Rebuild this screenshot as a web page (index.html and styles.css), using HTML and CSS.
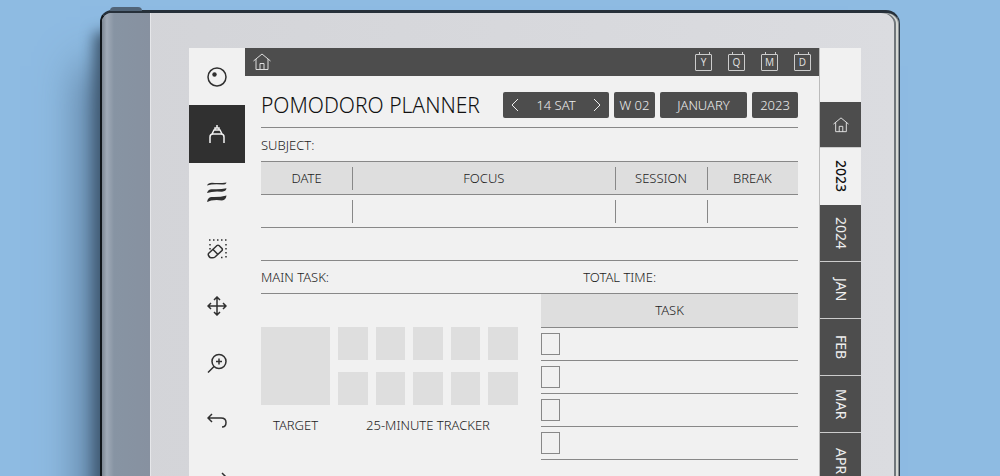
FILE: index.html
```html
<!DOCTYPE html>
<html lang="en">
<head>
<meta charset="utf-8">
<title>Pomodoro Planner</title>
<link rel="stylesheet" href="styles.css">
</head>
<body>

<div class="device">
  <div class="spine"></div>
  <div class="screen">

    <!-- pen tools -->
    <div class="tools">
      <button class="tool" aria-label="Close toolbar">
        <svg width="20" height="20" viewBox="0 0 20 20"><circle cx="10" cy="10" r="9"/><circle class="solid" cx="7.500" cy="7.500" r="2.200"/></svg>
      </button>
      <button class="tool active" aria-label="Pen">
        <svg width="20" height="20" viewBox="0 0 20 20"><path d="M3 19v-6q0-3 3-3h8q3 0 3 3v6M5 10l2-4h6l2 4M8 6V4h4v2M10 4V1"/></svg>
      </button>
      <button class="tool" aria-label="Stroke thickness">
        <svg width="20" height="20" viewBox="0 0 20 20"><path class="solid" d="M0 3.500Q1 .8 5 .8q8 .6 14.500-.4Q19 2.600 15 2.600 6 1.800 0 3.500z"/><path class="solid" d="M0 11Q1 7 5 7.200q8 .6 14.500-.9Q19 9.500 15 9.700 6 8.800 0 11z"/><path class="solid" d="M0 20Q1 14.800 5 15q8 .3 14.500-1.500Q19 18 15 18.400 5 17.300 0 20z"/></svg>
      </button>
      <button class="tool" aria-label="Eraser">
        <svg width="20" height="20" viewBox="0 0 20 20"><path class="dots" d="M2 1h18M19 5v15M3 5v6M14 18.500h3"/><path d="M1.500 14.500L10 6.500q1-.7 2 0l3 3q.7 1 0 2l-7 6.500q-1 .8-2.500.8H4q-1 0-1.500-.8l-1-1.500q-.5-1 0-2zM6 10.500l5 5"/></svg>
      </button>
      <button class="tool" aria-label="Move">
        <svg width="20" height="20" viewBox="0 0 20 20"><path d="M10 1v18M1 10h18M7 4l3-3 3 3M7 16l3 3 3-3M4 7l-3 3 3 3M16 7l3 3-3 3"/></svg>
      </button>
      <button class="tool" aria-label="Zoom in">
        <svg width="20" height="20" viewBox="0 0 20 20"><circle cx="12" cy="8.500" r="7"/><path d="M12 5.500v6M9 8.500h6M7 13.500L1 19.500"/></svg>
      </button>
      <button class="tool" aria-label="Undo">
        <svg width="20" height="20" viewBox="0 0 20 20"><path d="M5 4L1 8l4 4M1 8h13q5 0 5 4.500T15 17"/></svg>
      </button>
      <button class="tool" aria-label="Redo">
        <svg width="20" height="20" viewBox="0 0 20 20"><path d="M15 6l4 4-4 4M19 10H6q-5 0-5 4.500T5 19"/></svg>
      </button>
    </div>

    <!-- planner page -->
    <div class="page">
      <div class="topbar">
        <a href="#" class="home" aria-label="Home"><svg width="18" height="18" viewBox="0 0 18 18"><path d="M0.500 8L9 1l8.500 7M3 6v10.500h12V6M7 16.500v-6h4v6"/></svg></a>
        <a href="#" class="cal">Y</a>
        <a href="#" class="cal">Q</a>
        <a href="#" class="cal">M</a>
        <a href="#" class="cal">D</a>
      </div>

      <div class="content">
        <div class="header">
          <h1>POMODORO PLANNER</h1>
          <div class="dates">
            <div class="day">
              <button aria-label="Previous day"><svg width="8" height="12" viewBox="0 0 8 12"><path d="M7 0L1 6l6 6"/></svg></button>
              <a href="#">14 SAT</a>
              <button aria-label="Next day"><svg width="8" height="12" viewBox="0 0 8 12"><path d="M1 0l6 6-6 6"/></svg></button>
            </div>
            <a href="#" class="week">W 02</a>
            <a href="#" class="month">JANUARY</a>
            <a href="#" class="year">2023</a>
          </div>
        </div>

        <div class="line subject">
          <label for="subject">SUBJECT:</label>
          <input type="text" id="subject">
        </div>

        <table>
          <thead>
            <tr><th class="narrow">DATE</th><th>FOCUS</th><th class="narrow">SESSION</th><th class="narrow">BREAK</th></tr>
          </thead>
          <tbody>
            <tr><td></td><td></td><td></td><td></td></tr>
            <tr><td colspan="4"></td></tr>
          </tbody>
        </table>

        <div class="line totals">
          <div class="field">
            <label for="main-task">MAIN TASK:</label>
            <input type="text" id="main-task">
          </div>
          <div class="field">
            <label for="total-time">TOTAL TIME:</label>
            <input type="text" id="total-time">
          </div>
        </div>

        <div class="bottom">
          <div class="tracker">
            <div class="target"></div>
            <div class="boxes">
              <i></i><i></i><i></i><i></i><i></i>
              <i></i><i></i><i></i><i></i><i></i>
            </div>
            <span>TARGET</span>
            <span>25-MINUTE TRACKER</span>
          </div>
          <div class="tasks">
            <h2>TASK</h2>
            <ul>
              <li><input type="checkbox" aria-label="Task 1 done"></li>
              <li><input type="checkbox" aria-label="Task 2 done"></li>
              <li><input type="checkbox" aria-label="Task 3 done"></li>
              <li><input type="checkbox" aria-label="Task 4 done"></li>
            </ul>
          </div>
        </div>
      </div>
    </div>

    <!-- side tabs -->
    <div class="tabs">
      <a href="#" class="tab-home" aria-label="Home"><svg width="16" height="16" viewBox="0 0 18 18"><path d="M0.500 8L9 1l8.500 7M3 6v10.500h12V6M7 16.500v-6h4v6"/></svg></a>
      <a href="#" class="current">2023</a>
      <a href="#">2024</a>
      <a href="#">JAN</a>
      <a href="#">FEB</a>
      <a href="#">MAR</a>
      <a href="#">APR</a>
    </div>

  </div>
</div>

</body>
</html>
```
FILE: styles.css
```css
* { box-sizing: border-box; }

body {
  margin: 0;
  height: 100vh;
  overflow: hidden;
  background: #8ebbe2;
  color: #222;
  font-family: "Noto Sans", "Open Sans", sans-serif;
  font-size: 13px;
  font-weight: 300;
  line-height: 16px;
}

a { color: inherit; text-decoration: none; }
button { background: none; border: 0; padding: 0; color: inherit; cursor: pointer; }
svg { display: block; fill: none; stroke: currentColor; }

/* tablet body */
.device {
  position: relative;
  display: flex;
  min-height: 100vh;
  margin: 10px 10% 0;
  padding-right: 38px;
  border-top: 3px solid #26303a;
  border-left: 2px solid #11161b;
  border-right: 1px solid #2f3b46;
  border-radius: 12px 14px 0 0;
  background: linear-gradient(90deg, #d3d4d8, #dbdce0);
  box-shadow:
    inset -1px 0 #8b9196,
    inset -3px 0 #d5d8d4,
    inset -5px 0 #70767b,
    -14px 14px 14px -8px #3f5870,
    -36px 40px 40px -16px #5b7c9c;
}

/* power button on the top edge */
.device::before {
  content: "";
  position: absolute;
  top: -6px;
  left: 8px;
  width: 32px;
  height: 4px;
  border-radius: 4px 4px 0 0;
  background: #526578;
}

.spine {
  width: 49px;
  border-right: 1px solid #e6e7ea;
  border-top-left-radius: 9px;
  background: linear-gradient(90deg, #7c8692, #a0aab7 10%, #8794a3 25%, #8791a0);
}

.screen {
  flex: 1;
  display: flex;
  margin: 35px 0 0 38px;
  background: #f1f1f1;
}

/* left tools */
.tools { width: 56px; }

.tool {
  display: flex;
  align-items: center;
  justify-content: center;
  width: 100%;
  height: 57px;
  color: #303030;
}
.tool svg { stroke-width: 1.5; }
.tool .solid { fill: currentColor; stroke: none; }
.tool .dots { stroke-dasharray: 1.500 2.500; }
.tool.active { height: 58px; background: #303030; color: #f1f1f1; }

.page { flex: 1; }

.topbar {
  display: flex;
  align-items: center;
  gap: 16px;
  height: 28px;
  padding: 0 8px;
  background: #4d4d4d;
  color: #ddd;
}
.home { margin-right: auto; }

.cal {
  position: relative;
  width: 17px;
  height: 17px;
  border: 1px solid #ccc;
  border-radius: 1px;
  font-size: 10px;
  font-weight: 400;
  line-height: 15px;
  text-align: center;
}
.cal::before {
  content: "";
  position: absolute;
  top: -3px;
  left: 3px;
  width: 9px;
  height: 3px;
  border: solid #ccc;
  border-width: 0 1px;
}

.content { padding: 0 21px 0 16px; }

.header {
  display: flex;
  align-items: center;
  justify-content: space-between;
  height: 52px;
  padding-top: 6px;
  border-bottom: 1px solid #888;
}

h1 {
  margin: 0;
  color: #111;
  font-size: 21px;
  font-weight: 300;
  line-height: 24px;
}

.dates { display: flex; gap: 5px; }
.dates > * {
  height: 26px;
  border-radius: 2px;
  background: #4d4d4d;
  color: #eee;
  line-height: 26px;
  text-align: center;
}
.day {
  display: flex;
  align-items: center;
  justify-content: space-between;
  width: 106px;
  padding: 0 8px;
}
.week { width: 41px; }
.month { width: 87px; }
.year { width: 46px; }

.line {
  display: flex;
  align-items: center;
  height: 33px;
  border-bottom: 1px solid #888;
}
.line.subject { height: 34px; }
.line input {
  flex: 1;
  min-width: 0;
  padding: 0;
  border: 0;
  background: none;
  font: inherit;
}
.totals .field {
  display: flex;
  flex: 2;
  align-items: center;
  min-width: 0;
}
.totals .field:first-child { flex: 3; }

table {
  width: 100%;
  border-collapse: separate;
  border-spacing: 0;
  table-layout: fixed;
}
th, td {
  height: 33px;
  padding: 0;
  border-bottom: 1px solid #888;
  font-weight: 300;
}
th { background-color: #dedede; }
.narrow { width: 17%; }

/* short column rules that don't touch the row lines */
th + th, td + td {
  background-image: linear-gradient(#888, #888);
  background-repeat: no-repeat;
  background-position: 0 50%;
  background-size: 1px 23px;
}

.bottom {
  display: grid;
  grid-template-columns: 1fr 1fr;
  gap: 23px;
}

.tracker {
  display: grid;
  grid-template-columns: 69px 1fr;
  gap: 12px 8px;
  align-content: start;
  padding-top: 33px;
  text-align: center;
}
.target { background: #dedede; }
.boxes {
  display: grid;
  grid-template-columns: repeat(5, 1fr);
  gap: 12px 8px;
}
.boxes i { height: 33px; background: #dedede; }

.tasks h2 {
  margin: 0;
  height: 34px;
  border-bottom: 1px solid #888;
  background: #dedede;
  font-size: 13px;
  font-weight: 300;
  line-height: 33px;
  text-align: center;
}
.tasks ul { margin: 0; padding: 0; list-style: none; }
.tasks li {
  display: flex;
  align-items: center;
  height: 33px;
  border-bottom: 1px solid #888;
}
.tasks input {
  appearance: none;
  width: 19px;
  height: 22px;
  margin: 0;
  border: 1px solid #888;
}
.tasks input:checked { background: #4d4d4d; }

/* right tabs */
.tabs {
  width: 42px;
  padding-top: 54px;
  border-left: 1px solid #bbb;
}
.tabs a {
  display: flex;
  align-items: center;
  justify-content: center;
  width: 100%;
  height: 57px;
  border-bottom: 1px solid #ccc;
  background: #4d4d4d;
  color: #eee;
  font-size: 14px;
  font-weight: 400;
  writing-mode: vertical-rl;
}
.tabs .tab-home { height: 46px; }
.tabs .current {
  border-bottom-color: #f1f1f1;
  background: #f1f1f1;
  color: #111;
  font-weight: 500;
}
```
